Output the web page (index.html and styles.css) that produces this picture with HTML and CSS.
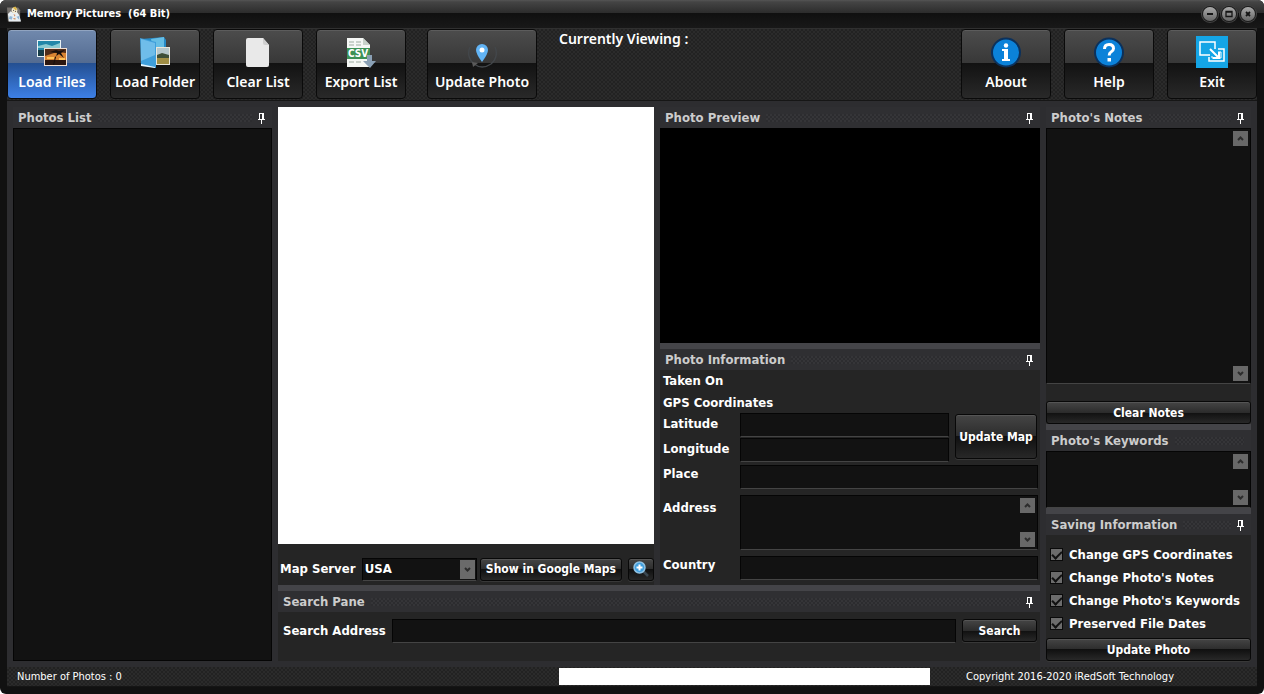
FILE: index.html
```html
<!DOCTYPE html>
<html lang="en">

<head>
    <meta charset="UTF-8">
    <title>Memory Pictures</title>
    <link rel="stylesheet" href="styles.css">
</head>

<body>
    <svg class="symbols" width="0" height="0">
        <symbol id="pin" viewBox="0 0 7 11">
            <path d="M1 0h5v6h1v1H4v4H3V7H0V6h1zM2 1v5h2V1z" fill="#fff" fill-rule="evenodd" />
        </symbol>
        <symbol id="up" viewBox="0 0 15 15">
            <path d="M5 9l2.500-2.500L10 9" fill="none" stroke="#2c2c2c" stroke-width="2" />
        </symbol>
        <symbol id="down" viewBox="0 0 15 15">
            <path d="M5 6l2.500 2.500L10 6" fill="none" stroke="#2c2c2c" stroke-width="2" />
        </symbol>
    </svg>

    <div class="window">
        <header class="titlebar">
            <svg class="app-icon" viewBox="0 0 16 16">
                <path d="M0 1h12l2 3v12H1z" fill="#77736f" />
                <path d="M1 8l3-3 3 2 3-2 3 4 2 7H2z" fill="#e8eef2" />
                <circle cx="8" cy="4" r="3" fill="#f4ead0" />
                <path d="M6 1l3-1 2 3-2 1z" fill="#d9b54a" />
                <path d="M3 10l3 1-1 3-3-1zM10 11l3-1v4z" fill="#8fb6d8" />
                <path d="M7 8l2 1-1 2zM6 13l3-1v2z" fill="#d08f62" />
                <circle cx="7" cy="4" r=".6" fill="#333" />
                <circle cx="9" cy="5" r=".6" fill="#333" />
            </svg>
            <h1>Memory Pictures&nbsp; (64 Bit)</h1>
            <div class="window-buttons">
                <button type="button" aria-label="Minimize"><svg viewBox="0 0 14 14"><path d="M4 7h6" stroke="#151515" stroke-width="2" /></svg></button>
                <button type="button" aria-label="Maximize"><svg viewBox="0 0 14 14"><path d="M4 4.500h6v5H4zM4 5h6" fill="none" stroke="#151515" stroke-width="1.300" /></svg></button>
                <button type="button" aria-label="Close"><svg viewBox="0 0 14 14"><path d="M5 5l4 4M9 5l-4 4" stroke="#151515" stroke-width="1.800" /></svg></button>
            </div>
        </header>

        <nav class="toolbar">
            <button type="button" class="tool active">
                <svg viewBox="0 0 32 32">
                    <path d="M1 4h24v17H1z" fill="#e9f2f5" />
                    <path d="M2 5h22v15H2z" fill="#2387a8" />
                    <path d="M2 10l8-2 6 2 8-3v5H2z" fill="#8ccbd2" />
                    <path d="M2 14h22v6H2z" fill="#173c48" />
                    <path d="M8 12h23v18H8z" fill="#f2dfd2" />
                    <path d="M9 13h21v16H9z" fill="#d98432" />
                    <path d="M9 13h21v4l-9-1-12 4z" fill="#512c18" />
                    <path d="M9 24h21v5H9z" fill="#2c1710" />
                    <path d="M18 29l3-12-7-1 6-2 3 1 6-1-4 3 3 5-5-4-4 3-2 8z" fill="#170f0c" />
                    <path d="M11 22h7M23 23h6" stroke="#ffc258" stroke-width="2" />
                </svg>
                Load Files
            </button>
            <button type="button" class="tool">
                <svg viewBox="0 0 32 32">
                    <path d="M2 3l23-2 2 3v22l-12 3z" fill="#278bc7" />
                    <path d="M12 3l13-2v12H14z" fill="#66bee5" />
                    <path d="M17 11h14v18H17z" fill="#e9e7dc" />
                    <path d="M18 12h12v16H18z" fill="#b6c7cb" />
                    <path d="M18 19l5-2 7 2v4H18z" fill="#3f4f38" />
                    <path d="M18 22h12v6H18z" fill="#a08e45" />
                    <path d="M1 2l16 4v26L2 29z" fill="#3f9fdb" />
                    <path d="M2 3l14 4v12L2 25z" fill="#6fbdea" />
                    <path d="M2 28l14 3v1L2 30z" fill="#e5f6ff" />
                </svg>
                Load Folder
            </button>
            <button type="button" class="tool">
                <svg viewBox="0 0 32 32">
                    <path d="M6 2h15l6 7v20q0 2-2 2H6q-2 0-2-2V4q0-2 2-2z" fill="#e9e9e9" />
                    <path d="M21 2v5q0 2 2 2h4z" fill="#cfcfcf" />
                </svg>
                Clear List
            </button>
            <button type="button" class="tool">
                <svg viewBox="0 0 32 32">
                    <path d="M2 2h16l7 7v22H2z" fill="#f5f7f5" />
                    <path d="M18 2v7h7z" fill="#c8d2ca" />
                    <path d="M4 5h5v2H4zM11 5h5v2h-5zM4 8h5v2H4zM11 8h5v2h-5zM4 25h5v2H4zM11 25h5v2h-5z" fill="#c9d1cb" />
                    <path d="M2 12h23v11H2z" fill="#3c9156" />
                    <text x="3" y="21" class="csv">CSV</text>
                    <path d="M22 19h5v6h4l-6 7-7-7h4z" fill="#8aa0b5" />
                </svg>
                Export List
            </button>
            <button type="button" class="tool wide">
                <svg viewBox="0 0 32 32">
                    <path d="M4 11A14 14 0 0 0 8 28q8 6 17 0a14 14 0 0 0 4-17" fill="none" stroke="#43474b" stroke-width="1.300" />
                    <path d="M6 26l6 1-5 4z" fill="#5a5a5a" />
                    <path d="M16 26q-6-8-6-12a6 6 0 0 1 12 0q0 4-6 12z" fill="#62b4f5" />
                    <circle cx="16" cy="14" r="2.500" fill="#fff" />
                </svg>
                Update Photo
            </button>
            <p class="viewing">Currently Viewing :</p>
            <button type="button" class="tool">
                <svg viewBox="0 0 32 32">
                    <circle cx="16" cy="16.500" r="14" fill="#0b82d9" stroke="#0c315b" stroke-width="2" />
                    <circle cx="16" cy="9.500" r="2.200" fill="#fff" />
                    <path d="M12 13h6v10h2v2h-8v-2h2v-8h-2z" fill="#fff" />
                </svg>
                About
            </button>
            <button type="button" class="tool">
                <svg viewBox="0 0 32 32">
                    <circle cx="16" cy="16.500" r="14" fill="#0b82d9" stroke="#0c315b" stroke-width="2" />
                    <path d="M11.500 13q0-4.500 4.500-4.500t4.500 4q0 2-2.500 3.500-1.800 1-1.800 3.500" fill="none" stroke="#fff" stroke-width="3" />
                    <path d="M14.500 22h3.500v3.500h-3.500z" fill="#fff" />
                </svg>
                Help
            </button>
            <button type="button" class="tool">
                <svg viewBox="0 0 32 32">
                    <path d="M0 0h32v32H0z" fill="#14a5e6" />
                    <path d="M14 19H4V6h15v7" fill="none" stroke="#fff" stroke-width="1.500" />
                    <path d="M22 13h6v12H13v-4" fill="none" stroke="#fff" stroke-width="1.500" />
                    <path d="M22 16h3v6M16 20v2h9" fill="none" stroke="#fff" stroke-width="1" />
                    <path d="M14 13l9 9M23 16v6h-6" fill="none" stroke="#fff" stroke-width="2" />
                </svg>
                Exit
            </button>
        </nav>

        <main class="workspace">
            <section class="panel photos">
                <h2>Photos List <svg><use href="#pin" /></svg></h2>
                <div class="photo-list"></div>
            </section>

            <div class="center">
                <div class="upper">
                    <section class="map-column">
                        <div class="map"></div>
                        <div class="map-tools">
                            <label for="mapServer">Map Server</label>
                            <div class="select">
                                <select id="mapServer">
                                    <option>USA</option>
                                </select>
                                <svg><use href="#down" /></svg>
                            </div>
                            <button type="button" class="btn">Show in Google Maps</button>
                            <button type="button" class="btn zoom" aria-label="Zoom in">
                                <svg viewBox="0 0 18 18">
                                    <path d="M11 11l5 5" stroke="#3b4750" stroke-width="2.500" />
                                    <circle cx="7.500" cy="7.500" r="5.500" fill="#3f9fdf" stroke="#8fc1e2" stroke-width="1.500" />
                                    <path d="M7.500 4.500v6M4.500 7.500h6" stroke="#fff" stroke-width="2" />
                                </svg>
                            </button>
                        </div>
                    </section>

                    <div class="photo-column">
                        <section class="panel">
                            <h2>Photo Preview <svg><use href="#pin" /></svg></h2>
                            <div class="preview"></div>
                        </section>
                        <section class="panel split info-panel">
                            <h2>Photo Information <svg><use href="#pin" /></svg></h2>
                            <form class="info">
                                <p>Taken On</p>
                                <p>GPS Coordinates</p>
                                <div class="gps">
                                    <label for="latitude">Latitude</label>
                                    <input type="text" id="latitude">
                                    <label for="longitude">Longitude</label>
                                    <input type="text" id="longitude">
                                    <button type="button" class="btn">Update Map</button>
                                </div>
                                <div class="place">
                                    <label for="place">Place</label>
                                    <input type="text" id="place">
                                    <label for="address" class="tall">Address</label>
                                    <div class="memo">
                                        <textarea id="address"></textarea>
                                        <div class="scroll">
                                            <svg><use href="#up" /></svg>
                                            <svg><use href="#down" /></svg>
                                        </div>
                                    </div>
                                    <label for="country">Country</label>
                                    <input type="text" id="country">
                                </div>
                            </form>
                        </section>
                    </div>
                </div>

                <section class="panel split">
                    <h2>Search Pane <svg><use href="#pin" /></svg></h2>
                    <form class="search">
                        <label for="searchAddress">Search Address</label>
                        <input type="text" id="searchAddress">
                        <button type="button" class="btn">Search</button>
                    </form>
                </section>
            </div>

            <div class="side">
                <section class="panel notes">
                    <h2><label for="notes">Photo's Notes</label> <svg><use href="#pin" /></svg></h2>
                    <div class="memo">
                        <textarea id="notes"></textarea>
                        <div class="scroll">
                            <svg><use href="#up" /></svg>
                            <svg><use href="#down" /></svg>
                        </div>
                    </div>
                    <button type="button" class="btn">Clear Notes</button>
                </section>
                <section class="panel split keywords">
                    <h2><label for="keywords">Photo's Keywords</label></h2>
                    <div class="memo">
                        <textarea id="keywords"></textarea>
                        <div class="scroll">
                            <svg><use href="#up" /></svg>
                            <svg><use href="#down" /></svg>
                        </div>
                    </div>
                </section>
                <section class="panel split">
                    <h2>Saving Information <svg><use href="#pin" /></svg></h2>
                    <form class="saving">
                        <label><input type="checkbox" checked> Change GPS Coordinates</label>
                        <label><input type="checkbox" checked> Change Photo's Notes</label>
                        <label><input type="checkbox" checked> Change Photo's Keywords</label>
                        <label><input type="checkbox" checked> Preserved File Dates</label>
                        <button type="button" class="btn">Update Photo</button>
                    </form>
                </section>
            </div>
        </main>

        <footer class="statusbar">
            <span>Number of Photos : 0</span>
            <div class="progress"></div>
            <span>Copyright 2016-2020 iRedSoft Technology</span>
        </footer>
    </div>
</body>

</html>
```
FILE: styles.css
```css
* {
    margin: 0;
    padding: 0;
    box-sizing: border-box;
}

body {
    background: #fff;
    color: #fff;
    font: bold 13px/16px "DejaVu Sans Condensed", "DejaVu Sans", sans-serif;
}

.symbols {
    position: absolute;
}

.window {
    display: flex;
    flex-direction: column;
    min-height: 100vh;
    padding: 0 7px 7px;
    background: #111;
    border-radius: 6px;
}

.titlebar {
    display: flex;
    align-items: center;
    gap: 5px;
    height: 28px;
    margin: 0 -7px;
    padding: 0 9px 0 7px;
    background: linear-gradient(#555 0, #444 2px, #2c2c2c 13px, #101010 13px, #181818 28px);
    border-radius: 6px 6px 0 0;
}

.app-icon {
    width: 15px;
    height: 16px;
}

.titlebar h1 {
    flex: 1;
    font: bold 11px/16px "DejaVu Sans Condensed", "DejaVu Sans", sans-serif;
}

.window-buttons {
    display: flex;
    gap: 5px;
}

.window-buttons button {
    width: 14px;
    height: 14px;
    border: none;
    border-radius: 50%;
    background: linear-gradient(#aaa, #666);
    box-shadow: 0 0 0 1px #1a1a1a, 0 0 0 2px #444;
}

.window-buttons svg {
    display: block;
    width: 14px;
    height: 14px;
}

.toolbar,
.statusbar {
    background: repeating-conic-gradient(#222 0 25%, #2b2b2b 0 50%) 0 0 / 4px 4px;
}

.toolbar {
    display: flex;
    gap: 13px;
    padding-bottom: 1px;
    border-top: 1px solid #303030;
    border-bottom: 1px solid #161616;
}

.tool {
    display: flex;
    flex-direction: column;
    align-items: center;
    gap: 4px;
    width: 90px;
    height: 70px;
    padding-top: 6px;
    border: 1px solid #0a0a0a;
    border-radius: 4px;
    background: linear-gradient(#4c4c4c, #383838 33px, #121212 33px, #292929);
    box-shadow: inset 0 1px #5c5c5c;
    color: #fff;
    font: 600 14px/20px "Noto Sans", sans-serif;
    white-space: nowrap;
}

.tool svg {
    width: 32px;
    height: 32px;
}

.tool.active {
    background: linear-gradient(#7189ad, #536b91 33px, #244f91 33px, #3d80e6);
    box-shadow: inset 0 1px #91a4c0;
}

.tool.wide {
    width: 110px;
    margin-left: 8px;
}

.csv {
    fill: #fff;
    font: bold 10px "DejaVu Sans Condensed", sans-serif;
}

.viewing {
    flex: 1;
    padding-left: 9px;
    font: 600 14px/20px "Noto Sans", sans-serif;
}

.workspace {
    display: grid;
    grid-template-columns: 259px 1fr 205px;
    gap: 6px;
    flex: 1;
    padding: 6px;
    background: #2d2d30;
}

.panel {
    display: flex;
    flex-direction: column;
    background: #252525;
}

.split {
    border-top: 6px solid #444448;
}

.panel h2 {
    display: flex;
    align-items: center;
    gap: 6px;
    height: 21px;
    padding: 1px 7px 0 5px;
    background: #2f2f32;
    color: #ccc;
    font: inherit;
}

.panel h2::after {
    content: "";
    order: 1;
    flex: 1;
    height: 8px;
    background: repeating-conic-gradient(#2c2c2f 0 25%, #353538 0 50%) 0 0 / 4px 4px;
}

.panel h2 svg {
    order: 2;
    width: 7px;
    height: 11px;
}

.photo-list {
    flex: 1;
    background: #121212;
    border: 1px solid #050505;
}

.center,
.side,
.map-column,
.photo-column {
    display: flex;
    flex-direction: column;
}

.upper {
    display: grid;
    grid-template-columns: 376fr 380fr;
    gap: 6px;
    flex: 1;
}

.map-column {
    background: #252525;
}

.map {
    flex: 1;
    background: #fff;
}

.map-tools {
    display: flex;
    align-items: center;
    height: 41px;
    padding: 9px 0 0 2px;
}

.map-tools label {
    flex: 1;
    white-space: nowrap;
}

input,
textarea,
select,
.memo {
    border: 1px solid #050505;
    border-bottom-color: #444;
    background: #121212;
    color: #fff;
    font: inherit;
}

input {
    min-width: 0;
    height: 24px;
    padding: 0 4px;
}

.select {
    position: relative;
    width: 115px;
    margin-right: 3px;
}

.select select {
    display: block;
    width: 100%;
    height: 23px;
    padding: 0 2px;
    appearance: none;
}

.select svg {
    position: absolute;
    top: 2px;
    right: 2px;
    width: 15px;
    height: 19px;
    background: #6a6a6a;
    pointer-events: none;
}

.btn {
    height: 23px;
    padding: 0 5px;
    border: 1px solid #080808;
    border-radius: 3px;
    background: linear-gradient(#454545, #2c2c2c 50%, #101010 50%, #282828);
    box-shadow: inset 0 1px #555, 0 1px #383838;
    color: #fff;
    font: inherit;
    font-size: 12px;
    white-space: nowrap;
}

.btn.zoom {
    width: 26px;
    margin-left: 6px;
    padding: 0 3px;
}

.zoom svg {
    display: block;
    width: 18px;
    height: 18px;
}

.preview {
    height: 215px;
    background: #000;
}

.info-panel {
    flex: 1;
}

.info {
    padding: 0 2px 5px;
}

.info p {
    height: 22px;
    padding: 3px 1px;
}

.gps,
.place {
    display: grid;
    align-items: start;
}

.gps {
    grid-template-columns: 78px 1fr 89px;
    row-gap: 1px;
    margin-top: -1px;
}

.place {
    grid-template-columns: 78px 1fr;
    row-gap: 6px;
    margin-top: 3px;
}

.gps label {
    padding: 3px 1px 0;
}

.place label {
    padding: 1px 1px 0;
}

.place .tall {
    padding-top: 5px;
}

.gps .btn {
    grid-column: 3;
    grid-row: 1 / 3;
    height: 45px;
    margin: 1px 1px 0 6px;
    padding: 0;
}

.memo {
    display: flex;
    height: 55px;
}

.memo textarea {
    flex: 1;
    min-width: 0;
    padding: 3px;
    border: none;
    resize: none;
}

.scroll {
    display: flex;
    flex-direction: column;
    justify-content: space-between;
    padding: 2px;
}

.scroll svg {
    width: 15px;
    height: 15px;
    background: #686868;
}

.search {
    display: flex;
    align-items: center;
    height: 49px;
    padding: 0 3px 12px 5px;
}

.search input {
    flex: 1;
    margin: 0 6px;
}

.search .btn {
    width: 75px;
}

.notes {
    flex: 1;
}

.notes .memo {
    flex: 1;
    margin-bottom: 17px;
}

.keywords .memo {
    height: 57px;
}

.saving {
    display: flex;
    flex-direction: column;
    padding-top: 8px;
}

.saving label {
    display: flex;
    align-items: center;
    gap: 6px;
    height: 23px;
    padding-left: 4px;
    white-space: nowrap;
}

.saving input {
    appearance: none;
    width: 13px;
    height: 13px;
    padding: 0;
    border: 1px solid #0a0a0a;
    background: #6c6c6c;
}

.saving input:checked::before {
    content: "";
    display: block;
    width: 8px;
    height: 4px;
    margin: 2px 1px;
    border: solid #111;
    border-width: 0 0 2px 2px;
    transform: rotate(-45deg);
}

.saving .btn {
    margin-top: 3px;
}

.statusbar {
    display: flex;
    align-items: center;
    height: 20px;
    padding: 0 83px 0 10px;
    border-bottom: 1px solid #151515;
    font: 11px/16px "DejaVu Sans Condensed", "DejaVu Sans", sans-serif;
}

.statusbar span {
    flex: 1;
}

.statusbar span:last-child {
    flex: none;
    margin-left: 36px;
}

.progress {
    width: 371px;
    height: 17px;
    background: #fff;
}
```
